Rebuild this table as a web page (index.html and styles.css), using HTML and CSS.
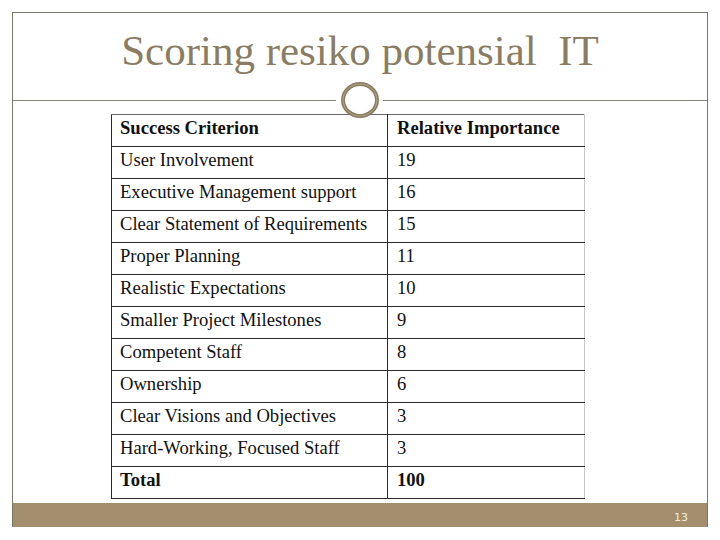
FILE: index.html
```html
<!DOCTYPE html>
<html>
<head>
<meta charset="utf-8">
<link rel="stylesheet" href="styles.css">
</head>
<body>
<div class="slide">
  <header class="title-area">
    <h1 class="title">Scoring resiko potensial&nbsp; IT</h1>
  </header>
  <div class="divider">
    <svg class="ring" width="40" height="38" viewBox="0 0 40 38">
      <ellipse cx="20" cy="19" rx="17" ry="16" fill="none" stroke="#8a7c63" stroke-width="4"/>
      <ellipse cx="20" cy="19" rx="17" ry="16" fill="none" stroke="#b3a68c" stroke-width="1"/>
    </svg>
  </div>
  <main class="content">
    <table class="scores">
      <tr class="head"><td>Success Criterion</td><td>Relative Importance</td></tr>
      <tr><td>User Involvement</td><td>19</td></tr>
      <tr><td>Executive Management support</td><td>16</td></tr>
      <tr><td>Clear Statement of Requirements</td><td>15</td></tr>
      <tr><td>Proper Planning</td><td>11</td></tr>
      <tr><td>Realistic Expectations</td><td>10</td></tr>
      <tr><td>Smaller Project Milestones</td><td>9</td></tr>
      <tr><td>Competent Staff</td><td>8</td></tr>
      <tr><td>Ownership</td><td>6</td></tr>
      <tr><td>Clear Visions and Objectives</td><td>3</td></tr>
      <tr><td>Hard-Working, Focused Staff</td><td>3</td></tr>
      <tr class="head"><td>Total</td><td>100</td></tr>
    </table>
  </main>
  <footer class="band"><span class="page">13</span></footer>
</div>
</body>
</html>
```

FILE: styles.css
```css
html, body {
  margin: 0;
  padding: 0;
  background: #ffffff;
}
.slide {
  margin: 12px 0 0 12px;
  width: 696px;
  height: 515px;
  box-sizing: border-box;
  border: 1px solid #77776a;
  border-bottom: none;
  display: flex;
  flex-direction: column;
}
.title-area {
  height: 87px;
  display: flex;
  justify-content: center;
}
.title {
  margin: 13px 0 0 0;
  font-family: "Liberation Serif", "Times New Roman", serif;
  font-weight: normal;
  font-size: 43px;
  line-height: 50px;
  color: #8b7d64;
}
.divider {
  position: relative;
  height: 1px;
  background: linear-gradient(to right, #8a8575 0, #8a8575 323px, transparent 323px, transparent 370px, #8a8575 370px);
}
.ring {
  position: absolute;
  left: 327px;
  top: -19px;
}
.content {
  flex: 1;
  padding: 13px 0 0 98px;
}
.scores {
  border-collapse: collapse;
  width: 474px;
  font-family: "Liberation Serif", "Times New Roman", serif;
  font-size: 18.6px;
  color: #111;
}
.scores td {
  height: 32px;
  padding: 0 0 5px 8px;
  border: 1.5px solid #2a2a2a;
  vertical-align: middle;
  box-sizing: border-box;
  white-space: nowrap;
}
.scores td:first-child {
  width: 276px;
}
.scores td:last-child {
  border-right: 1.5px solid #c8c8c8;
  padding-left: 9px;
}
.scores tr:first-child td {
  border-top-color: #666;
}
.scores .head td {
  font-weight: bold;
}
.band {
  height: 24px;
  background: #a38f6d;
  display: flex;
  justify-content: flex-end;
  align-items: center;
  padding-right: 19px;
}
.page {
  font-family: "DejaVu Sans", sans-serif;
  font-size: 11px;
  color: #f4eedd;
  padding-top: 4px;
}
```
